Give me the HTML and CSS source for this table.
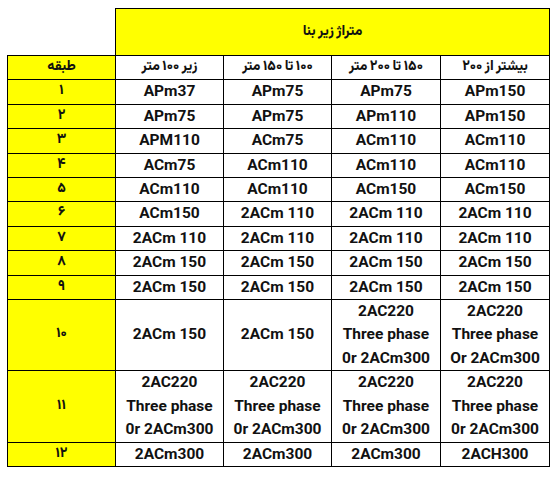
FILE: index.html
```html
<!DOCTYPE html>
<html lang="fa">
<head>
<meta charset="utf-8">
<link rel="stylesheet" href="styles.css">
</head>
<body>
<div class="wrap">
<table class="grid">
  <colgroup>
    <col class="c1"><col class="c2"><col class="c3"><col class="c4"><col class="c5">
  </colgroup>
  <thead>
    <tr class="top">
      <th class="blank"></th>
      <th class="title y" colspan="4"><span class="fa-text" dir="rtl">متراژ زیر بنا</span></th>
    </tr>
    <tr class="sub">
      <th class="y fa" dir="rtl">طبقه</th>
      <th class="fa" dir="rtl">زیر ۱۰۰ متر</th>
      <th class="fa" dir="rtl">۱۰۰ تا ۱۵۰ متر</th>
      <th class="fa" dir="rtl">۱۵۰ تا ۲۰۰ متر</th>
      <th class="fa" dir="rtl">بیشتر از ۲۰۰</th>
    </tr>
  </thead>
  <tbody>
    <tr><th class="y fa">۱</th><td>APm37</td><td>APm75</td><td>APm75</td><td>APm150</td></tr>
    <tr><th class="y fa">۲</th><td>APm75</td><td>APm75</td><td>APm110</td><td>APm150</td></tr>
    <tr><th class="y fa">۳</th><td>APM110</td><td>ACm75</td><td>ACm110</td><td>ACm110</td></tr>
    <tr><th class="y fa">۴</th><td>ACm75</td><td>ACm110</td><td>ACm110</td><td>ACm110</td></tr>
    <tr><th class="y fa">۵</th><td>ACm110</td><td>ACm110</td><td>ACm150</td><td>ACm150</td></tr>
    <tr><th class="y fa">۶</th><td>ACm150</td><td>2ACm 110</td><td>2ACm 110</td><td>2ACm 110</td></tr>
    <tr><th class="y fa">۷</th><td>2ACm 110</td><td>2ACm 110</td><td>2ACm 110</td><td>2ACm 110</td></tr>
    <tr><th class="y fa">۸</th><td>2ACm 150</td><td>2ACm 150</td><td>2ACm 150</td><td>2ACm 150</td></tr>
    <tr><th class="y fa">۹</th><td>2ACm 150</td><td>2ACm 150</td><td>2ACm 150</td><td>2ACm 150</td></tr>
    <tr><th class="y fa">۱۰</th><td>2ACm 150</td><td>2ACm 150</td><td>2AC220<br>Three phase<br>0r 2ACm300</td><td>2AC220<br>Three phase<br>Or 2ACm300</td></tr>
    <tr><th class="y fa">۱۱</th><td>2AC220<br>Three phase<br>0r 2ACm300</td><td>2AC220<br>Three phase<br>0r 2ACm300</td><td>2AC220<br>Three phase<br>0r 2ACm300</td><td>2AC220<br>Three phase<br>0r 2ACm300</td></tr>
    <tr><th class="y fa">۱۲</th><td>2ACm300</td><td>2ACm300</td><td>2ACm300</td><td>2ACH300</td></tr>
  </tbody>
</table>
</div>
</body>
</html>
```
FILE: styles.css
```css
html, body {
  margin: 0;
  padding: 0;
  background: #ffffff;
}

.wrap {
  padding: 8px 0 0 7px;
}

.grid {
  border-collapse: collapse;
  table-layout: fixed;
  width: 542px;
  color: #111111;
  font-family: Roboto, "Liberation Sans", Arial, sans-serif;
  font-weight: 700;
  font-size: 15.5px;
}

.c1, .c2, .c3 { width: 108px; }
.c4, .c5 { width: 109px; }

.grid td,
.grid th {
  border: 1.5px solid #000000;
  padding: 0;
  text-align: center;
  vertical-align: middle;
  line-height: 23.4px;
  font-weight: 700;
}

.grid .blank {
  border: none;
  background: #ffffff;
}

.y {
  background: #ffff00;
}

.top th.title {
  height: 46px;
  text-align: center;
}

.fa-text {
  display: inline-block;
  font-family: "Vazirmatn", "Noto Sans Arabic", "DejaVu Sans", sans-serif;
  font-size: 14px;
  font-weight: 800;
  word-spacing: -1px;
}

.grid .fa {
  font-family: "Vazirmatn", "Noto Sans Arabic", "DejaVu Sans", sans-serif;
  font-size: 14px;
  font-weight: 800;
  word-spacing: -1px;
}
```
